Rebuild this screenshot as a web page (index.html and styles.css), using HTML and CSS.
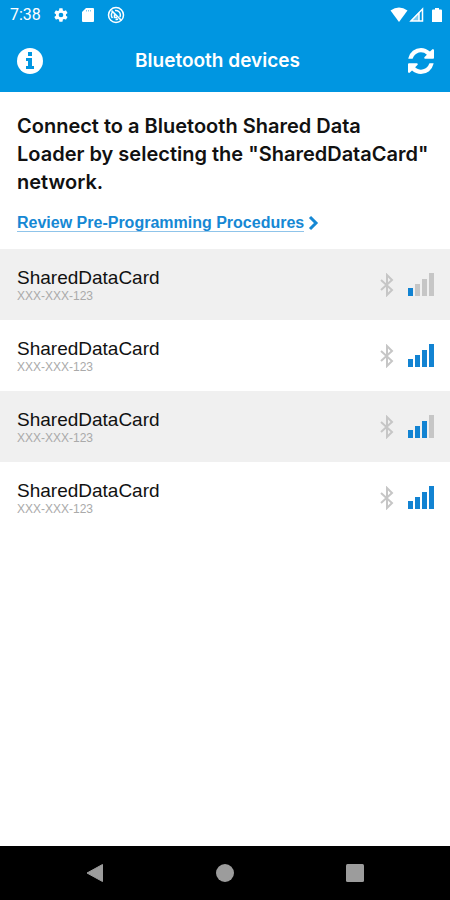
FILE: index.html
```html
<!DOCTYPE html>
<html lang="en">
<head>
<meta charset="utf-8">
<meta name="viewport" content="width=device-width, initial-scale=1">
<title>Bluetooth devices</title>
<link rel="stylesheet" href="styles.css">
</head>
<body>
<svg class="defs" aria-hidden="true">
  <symbol id="bt" viewBox="0 0 14 24">
    <path d="M1 7l11 10-5 5V2l5 5L1 17" fill="none" stroke="currentColor" stroke-width="2"/>
  </symbol>
</svg>
<div class="status">
  <span class="time">7:38</span>
  <svg width="16" height="16" viewBox="0 0 24 24" fill="currentColor"><path d="M19.4 13c0-.3.1-.6.1-1s0-.7-.1-1l2.100-1.600c.2-.2.200-.4.100-.600l-2-3.500c-.1-.2-.4-.3-.6-.2l-2.500 1c-.5-.4-1.100-.700-1.700-1l-.400-2.600c0-.300-.200-.500-.500-.500h-4c-.3 0-.5.2-.5.500l-.4 2.600c-.6.3-1.200.6-1.700 1l-2.500-1c-.2-.1-.5 0-.6.2l-2 3.500c-.1.2-.1.500.1.600L4.500 11c0 .3-.1.600-.1 1s0 .7.1 1l-2.200 1.600c-.2.200-.2.400-.1.600l2 3.500c.1.200.4.300.6.200l2.500-1c.5.400 1.100.7 1.700 1l.4 2.600c0 .3.2.5.5.5h4c.3 0 .5-.2.5-.5l.4-2.600c.6-.3 1.200-.6 1.700-1l2.500 1c.2.100.5 0 .6-.2l2-3.500c.1-.2.1-.5-.1-.6zM12 15.500a3.500 3.500 0 110-7 3.500 3.500 0 010 7z"/></svg>
  <svg width="14" height="16" viewBox="0 0 14 16"><path d="M5 1h7q1 0 1 1v12q0 1-1 1H2q-1 0-1-1V5z" fill="currentColor"/><path d="M5.500 3v1.500M7.500 3v1.500M9.500 3v1.500" stroke="#0096e1" stroke-opacity=".5"/></svg>
  <svg width="18" height="18" viewBox="0 0 18 18" fill="none" stroke="currentColor"><circle cx="9" cy="9" r="7.500" stroke-width="1.500"/><path d="M5.500 12A4.500 4.500 0 016 5.500M8 4.600A4.500 4.500 0 0113.400 9q0 1-.6 2M11 13q-1 .5-2.500.5" stroke-width="1.500"/><path d="M4.500 4.500l9.500 9.500M7.500 8.500v3h2.500" stroke-width="1.600"/></svg>
  <span class="space"></span>
  <svg width="18" height="16" viewBox="0 0 18 16"><path d="M.5 3.500Q9-2.500 17.500 3.500L9 15z" fill="currentColor"/></svg>
  <svg width="15" height="16" viewBox="0 0 15 16"><path d="M13.500 2v12H2zM10 6v8" fill="none" stroke="currentColor" stroke-width="1.500"/><path d="M10 5v9H1z" fill="currentColor" fill-opacity=".5"/></svg>
  <svg class="battery" width="10" height="16" viewBox="0 0 10 16"><path d="M3 1h4v1.500h2q1 0 1 1V15H0V3.500q0-1 1-1h2z" fill="currentColor"/></svg>
</div>
<header class="bar">
  <button class="icon" aria-label="Information"><svg width="26" height="26" viewBox="0 0 26 26"><circle cx="13" cy="13" r="13" fill="#fff"/><path d="M11 4h4v4h-4zM9 10h6v8h2v3H9v-3h2v-5H9z" fill="#0096e1"/></svg></button>
  <h1>Bluetooth devices</h1>
  <button class="icon" aria-label="Refresh"><svg width="26" height="26" viewBox="0 128 1536 1536"><path fill="#fff" d="M1511 1056q0 5-1 7-64 268-268 434.500t-478 166.500q-146 0-282.500-55t-243.500-157l-129 129q-19 19-45 19t-45-19-19-45v-448q0-26 19-45t45-19h448q26 0 45 19t19 45-19 45l-137 137q71 66 161 102t187 36q134 0 250-65t186-179q11-17 53-117 8-23 30-23h192q13 0 22.500 9.500t9.500 22.500zm25-800v448q0 26-19 45t-45 19h-448q-26 0-45-19t-19-45 19-45l138-138q-148-137-349-137-134 0-250 65t-186 179q-11 17-53 117-8 23-30 23h-199q-13 0-22.500-9.500t-9.500-22.500v-7q65-268 270-434.500t480-166.500q146 0 284 55.500t245 156.500l130-129q19-19 45-19t45 19 19 45z"/></svg></button>
</header>
<main>
  <section class="intro">
    <h2>Connect to a Bluetooth Shared Data Loader by selecting the "SharedDataCard" network.</h2>
    <a href="#procedures"><span>Review Pre-Programming Procedures</span><svg width="12" height="16" viewBox="0 0 12 16"><path d="M2 2l6 6-6 6" fill="none" stroke="currentColor" stroke-width="3"/></svg></a>
  </section>
  <ul class="devices">
    <li><div class="device"><strong>SharedDataCard</strong><small>XXX-XXX-123</small></div><svg class="bt"><use href="#bt"/></svg><div class="signal s1" role="img" aria-label="Signal 1 of 4"><i></i><i></i><i></i><i></i></div></li>
    <li><div class="device"><strong>SharedDataCard</strong><small>XXX-XXX-123</small></div><svg class="bt"><use href="#bt"/></svg><div class="signal" role="img" aria-label="Signal 4 of 4"><i></i><i></i><i></i><i></i></div></li>
    <li><div class="device"><strong>SharedDataCard</strong><small>XXX-XXX-123</small></div><svg class="bt"><use href="#bt"/></svg><div class="signal s3" role="img" aria-label="Signal 3 of 4"><i></i><i></i><i></i><i></i></div></li>
    <li><div class="device"><strong>SharedDataCard</strong><small>XXX-XXX-123</small></div><svg class="bt"><use href="#bt"/></svg><div class="signal" role="img" aria-label="Signal 4 of 4"><i></i><i></i><i></i><i></i></div></li>
  </ul>
</main>
<nav class="nav">
  <button aria-label="Back"><svg width="20" height="20" viewBox="0 0 20 20"><path d="M17.500 1.500v17L2 10z" fill="currentColor" stroke="currentColor" stroke-linejoin="round"/></svg></button>
  <button aria-label="Home"><svg width="20" height="20" viewBox="0 0 20 20"><circle cx="10" cy="10" r="9" fill="currentColor"/></svg></button>
  <button aria-label="Recent apps"><svg width="20" height="20" viewBox="0 0 20 20"><rect x="1" y="1" width="18" height="18" rx="1.500" fill="currentColor"/></svg></button>
</nav>
</body>
</html>
```
FILE: styles.css
```css
* { box-sizing: border-box; }
body {
  margin: 0;
  min-height: 100vh;
  display: flex;
  flex-direction: column;
  background: #fff;
  color: #111;
  font-family: "Liberation Sans", Arial, sans-serif;
}
svg { display: block; flex: none; }
button { border: 0; padding: 0; background: none; color: inherit; }
h1, h2, ul { margin: 0; padding: 0; }
.defs { position: absolute; width: 0; height: 0; }
.status {
  height: 30px;
  padding: 0 8px 0 10px;
  display: flex;
  align-items: center;
  gap: 12px;
  background: #0096e1;
  color: #fff;
}
.time { font: 16px/20px Roboto, sans-serif; }
.space { flex: 1; }
.status .space ~ svg { margin-left: -11px; }
.status .battery.battery { margin-left: -4px; }
.bar {
  height: 62px;
  padding: 0 16px 0 17px;
  display: flex;
  align-items: center;
  background: #0096e1;
  color: #fff;
}
h1 {
  flex: 1;
  padding-right: 16px;
  font: 600 19px/28px Inter, sans-serif;
  text-align: center;
}
.intro { padding: 20px 19px 17px 17px; }
h2 { font: 600 20px/28px Inter, sans-serif; margin-bottom: 18px; }
.intro a {
  display: flex;
  align-items: center;
  gap: 4px;
  color: #1688d4;
  font: bold 16px/18px "Liberation Sans", Arial, sans-serif;
  text-decoration: none;
}
.intro a span { border-bottom: 1px solid #8fc4ea; line-height: 17px; }
.devices { list-style: none; }
li {
  height: 71px;
  padding: 0 16px 0 17px;
  display: flex;
  align-items: center;
}
li:nth-child(odd) { background: #f0f0f0; }
.device { flex: 1; display: flex; flex-direction: column; }
strong { font: 19px/22px "Liberation Sans", Arial, sans-serif; }
small { font: 12px/14px "Liberation Sans", Arial, sans-serif; color: #aaa; }
.bt { width: 14px; height: 24px; margin-right: 14px; color: #c6c6c6; }
.signal { display: flex; align-items: flex-end; gap: 2px; }
.signal i { width: 5px; height: 8px; background: #1283d2; }
.signal i:nth-child(2) { height: 12px; }
.signal i:nth-child(3) { height: 17px; }
.signal i:nth-child(4) { height: 23px; }
.s1 i:nth-child(n+2), .s3 i:nth-child(4) { background: #c6c6c6; }
.nav {
  height: 54px;
  margin-top: auto;
  padding: 0 85px;
  display: flex;
  align-items: center;
  justify-content: space-between;
  background: #000;
  color: #9c9c9c;
}
```
